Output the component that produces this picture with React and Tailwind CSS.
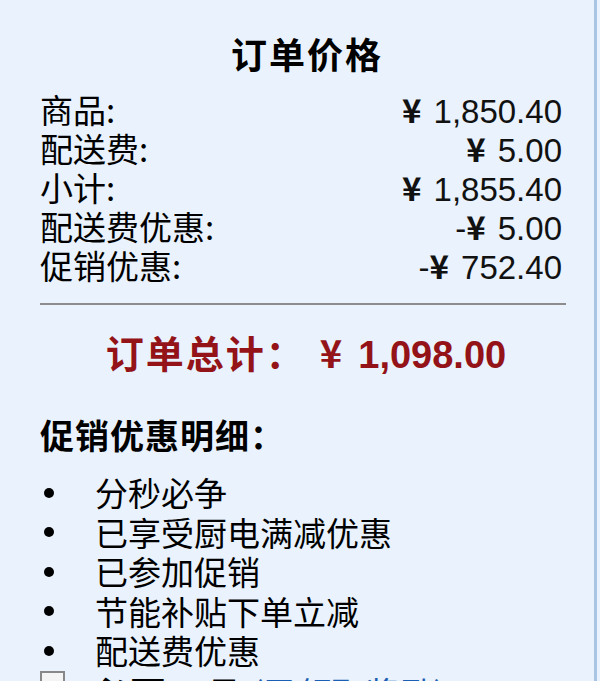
import React from 'react';

const rows = [
  { label: '商品:', value: '¥ 1,850.40' },
  { label: '配送费:', value: '¥ 5.00' },
  { label: '小计:', value: '¥ 1,855.40' },
  { label: '配送费优惠:', value: '-¥ 5.00' },
  { label: '促销优惠:', value: '-¥ 752.40' },
];

const promos = ['分秒必争', '已享受厨电满减优惠', '已参加促销', '节能补贴下单立减', '配送费优惠'];

const cjk = { fontFamily: '"Noto Sans CJK SC", "Noto Sans", sans-serif' };
const num = { fontFamily: '"Liberation Sans", "Noto Sans CJK SC", sans-serif' };

export default function App() {
  return (
    <div className="w-[600px] h-[681px] overflow-hidden bg-[#e9f2fd] flex">
      <div className="flex-1 flex flex-col pl-[40px] pr-[32px] pt-[28px] text-black" style={cjk}>
        {/* TITLE */}
        <h2 className="text-center text-[36px] font-bold leading-[50px] tracking-[2px] pl-[12px]">订单价格</h2>

        {/* PRICE ROWS */}
        <div className="flex flex-col mt-[12px]">
          {rows.map((r) => (
            <div key={r.label} className="flex justify-between items-center h-[39px]">
              <span className="block text-[33px] leading-[39px] h-[39px]">{r.label}</span>
              <span className="block text-[33px] leading-[39px] h-[39px] text-[#111]" style={num}>
                {r.value.startsWith('-') && '-'}
                <span className="font-bold" style={cjk}>¥</span>
                <span className="ml-[12px]">{r.value.split(' ')[1]}</span>
              </span>
            </div>
          ))}
        </div>

        <div className="mt-[18px] mr-[-4px] border-t-2 border-[#8d8d8d]" />

        {/* TOTAL */}
        <div className="text-center mt-[22px] text-[38px] font-bold leading-[50px] h-[50px] text-[#931318] pl-[10px] whitespace-nowrap">
          <span className="tracking-[2px]">订单总计：</span>
          <span className="ml-[14px]">¥</span>
          <span className="ml-[16px]" style={num}>1,098.00</span>
        </div>

        {/* PROMO DETAILS */}
        <h3 className="mt-[34px] text-[34px] font-bold leading-[48px] h-[48px] tracking-[1px]">促销优惠明细：</h3>
        <ul className="mt-[14px] flex flex-col">
          {promos.map((p) => (
            <li key={p} className="flex items-center h-[39.5px]">
              <span className="w-[10px] h-[10px] rounded-full bg-black ml-[4px] mr-[41px]" />
              <span className="block text-[33px] leading-[39px] h-[39px]">{p}</span>
            </li>
          ))}
        </ul>

        {/* TOOLS (cut off) */}
        <div className="flex items-start mt-[-6px]">
          <span className="w-[25px] h-[25px] border-2 border-[#888] bg-[#f4f4f4] mt-[6px]" />
          <span className="block ml-[27px] text-[36px] font-bold leading-[40px] h-[40px] tracking-[2px] pt-[8px]">必要工具</span>
          <span className="block ml-[8px] text-[34px] leading-[40px] h-[40px] pt-[8px] text-[#1a5fb4]">(已领取奖励)</span>
        </div>
      </div>
      <div className="w-[3px] h-full bg-[#a8c6e4] mr-[3px]" />
    </div>
  );
}
